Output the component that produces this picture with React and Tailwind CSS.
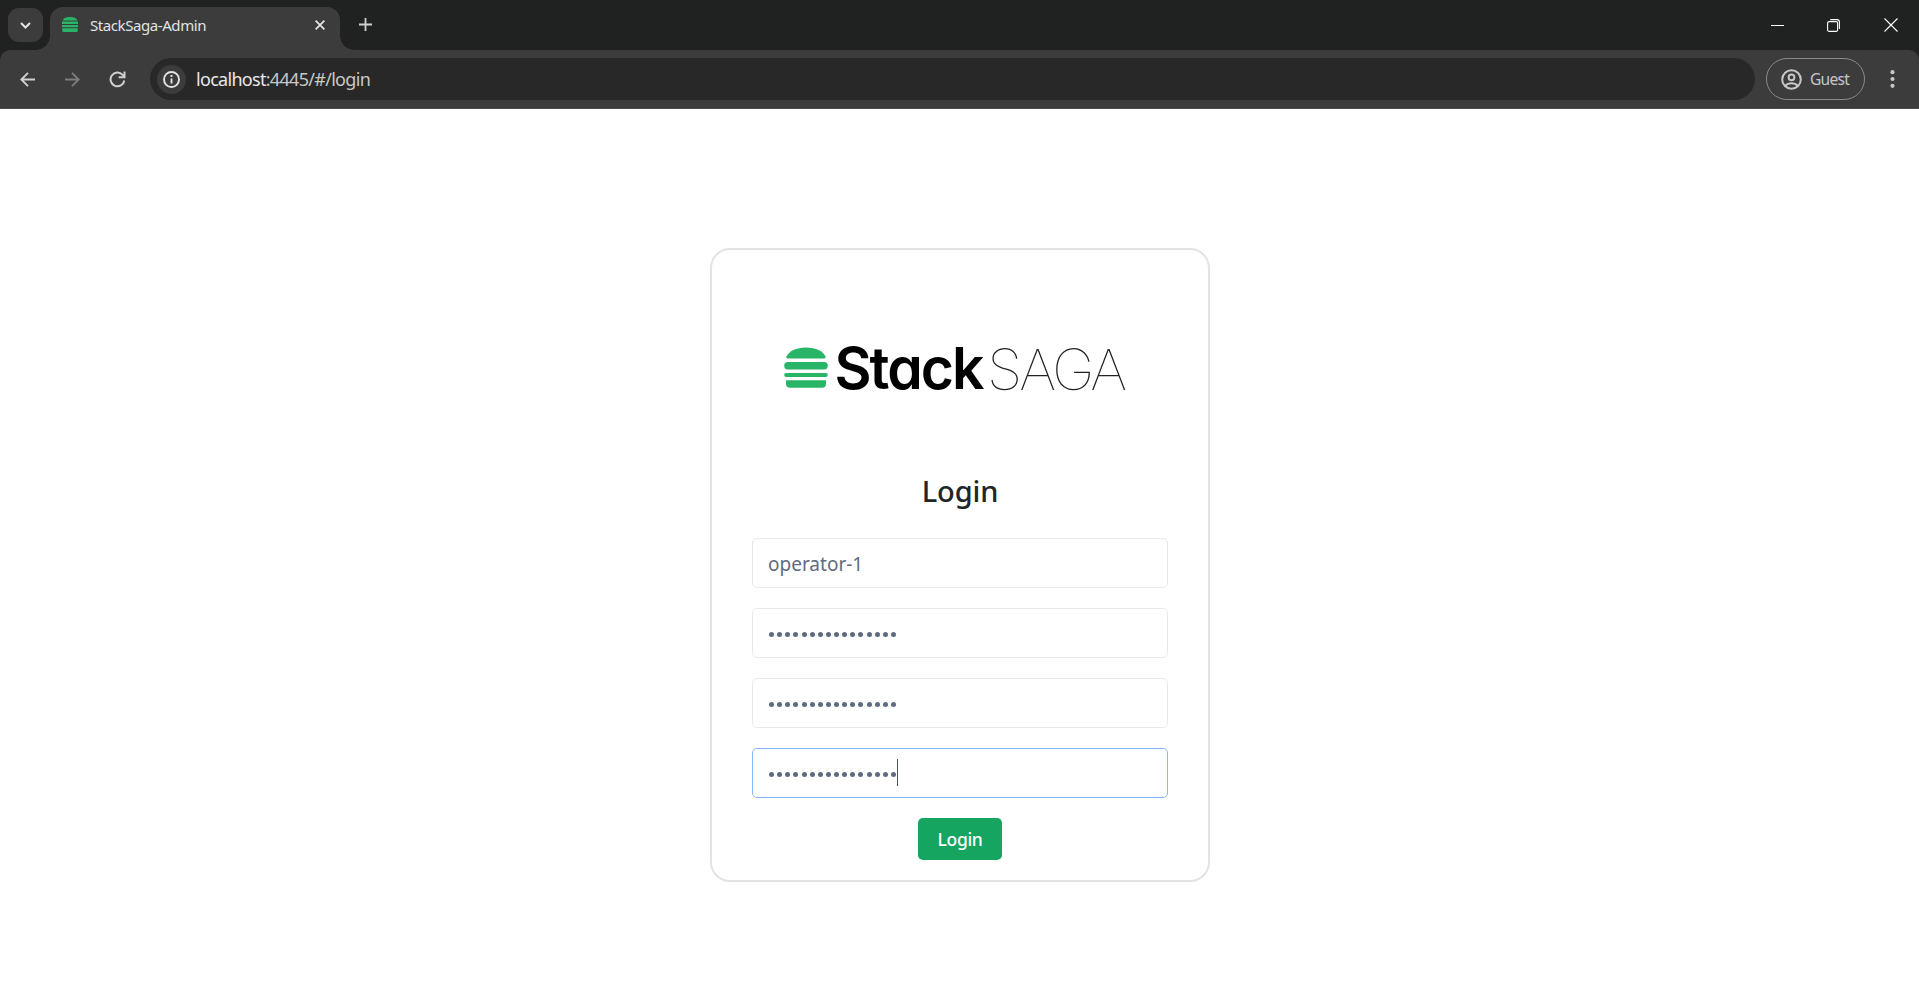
import React from "react";

function Burger({ className }) {
  return (
    <svg className={className} viewBox="0 0 44 41" preserveAspectRatio="none" fill="#28b568">
      <path d="M2.3 9.8C5 4 12 .5 22 .5S39 4 41.700 9.800q.4 1.700-1.700 1.700H4Q1.900 11.500 2.300 9.800Z" />
      <rect x="0.200" y="15" width="43.600" height="7.500" rx="3.700" />
      <rect x="0.200" y="26" width="43.600" height="4" rx="2" />
      <path d="M2 33.300h40v3.500q0 4-4 4H6q-4 0-4-4Z" />
    </svg>
  );
}

function TabIcon() {
  return (
    <svg className="h-[15px] w-4" viewBox="0 0 16 15" fill="#28b568">
      <path d="M.5 3.400Q2 0 8 0t7.500 3.400Z" />
      <path d="M0 4.500h16v2.500H0ZM0 8h16v2.200H0ZM.3 11.300h15.400V14q0 1-1 1H1.300q-1 0-1-1Z" />
    </svg>
  );
}

function TabStrip() {
  return (
    <div className="flex h-[50px] items-start bg-[#202221] pl-2 text-[#e3e3e3]">
      <div className="mt-2 flex h-[34px] w-[35px] items-center justify-center rounded-[11px] bg-[#3c3c3c]">
        <svg className="h-[7px] w-[11px]" viewBox="0 0 11 7" fill="none" stroke="currentColor" strokeWidth="2">
          <path d="M1 1l4.500 4.500L10 1" />
        </svg>
      </div>
      <div className="relative ml-[7px] mt-[7px] flex h-[43px] w-[290px] items-center rounded-t-[13px] bg-[#3c3c3c] pb-[8px] pl-3 pr-[15px]">
        <span className="absolute -left-3.5 bottom-0 size-3.5 bg-[radial-gradient(circle_at_0_0,transparent_13.500px,#3c3c3c_14px)]" />
        <span className="absolute -right-3.5 bottom-0 size-3.5 bg-[radial-gradient(circle_at_100%_0,transparent_13.500px,#3c3c3c_14px)]" />
        <TabIcon />
        <span className="ml-3 mt-px flex-1 whitespace-nowrap text-[15px] leading-5 tracking-[-0.420px]">StackSaga-Admin</span>
        <svg className="mt-px size-[10px]" viewBox="0 0 10 10" stroke="currentColor" strokeWidth="1.800">
          <path d="M.6.6l8.800 8.800M9.400.6L.6 9.400" />
        </svg>
      </div>
      <svg className="ml-[19px] mt-[18px] size-[13px]" viewBox="0 0 13 13" stroke="#cfcfcf" strokeWidth="1.800">
        <path d="M0 6.500h13M6.500 0v13" />
      </svg>
      <div className="ml-auto mr-[21px] mt-[18px] flex items-center gap-[43px]">
        <svg className="size-[13px]" viewBox="0 0 13 13" stroke="#fff">
          <path d="M0 6.500h13" />
        </svg>
        <svg className="size-[13px]" viewBox="0 0 13 13" fill="none" stroke="#fff" strokeWidth="1.100">
          <path d="M3.200.6h6.700q2.500 0 2.500 2.500v7" />
          <rect x="0.600" y="2.600" width="10" height="9.800" rx="1.500" />
        </svg>
        <svg className="ml-px size-[14px]" viewBox="0 0 14 14" stroke="#fff" strokeWidth="1.100">
          <path d="M.5.5l13 13M13.500.5l-13 13" />
        </svg>
      </div>
    </div>
  );
}

function Toolbar() {
  return (
    <div className="bg-[#202221]">
      <div className="flex h-[59px] items-center rounded-t-[10px] border-b border-[#484848] bg-[#3c3c3c] pl-5 pr-6">
        <svg className="size-[15px]" viewBox="0 0 15 15" fill="none" stroke="#d0d0d0" strokeWidth="1.900">
          <path d="M15 7.500H1.500M8 .8L1.300 7.500 8 14.200" />
        </svg>
        <svg className="ml-[30px] size-[15px]" viewBox="0 0 15 15" fill="none" stroke="#7c7c7c" strokeWidth="1.900">
          <path d="M0 7.500h13.500M7 .8l6.700 6.700L7 14.200" />
        </svg>
        <svg className="ml-[29px] size-[17px]" viewBox="0 0 17 17" fill="none" stroke="#d0d0d0" strokeWidth="2">
          <path d="M15.300 9.500A6.900 6.900 0 1 1 13.600 3.800L15.300 5.500" />
          <path d="M15.500.4v5.800H9.700" />
        </svg>
        <div className="ml-6 flex h-[42px] w-[1605px] items-center rounded-full bg-[#282828] pl-[7px]">
          <div className="flex size-[29px] items-center justify-center rounded-full bg-[#3c3c3c]">
            <svg className="size-[17px]" viewBox="0 0 17 17" fill="none" stroke="#e3e3e3">
              <circle cx="8.500" cy="8.500" r="7.500" strokeWidth="1.900" />
              <path d="M8.500 7.500v5M8.500 4v2" strokeWidth="1.900" />
            </svg>
          </div>
          <span className="ml-[10px] whitespace-nowrap text-[18px] leading-6 tracking-[-0.700px] text-[#c7c7c7]">
            <span className="text-[#e8e8e8]">localhost</span>:4445/#/login
          </span>
        </div>
        <div className="ml-[11px] flex h-[42px] w-[99px] items-center rounded-full border border-[#8a8a8a] pl-3.5">
          <svg className="size-[21px]" viewBox="0 0 21 21" fill="none" stroke="#c7c7c7" strokeWidth="2">
            <circle cx="10.500" cy="10.500" r="9.300" />
            <circle cx="10.500" cy="8.300" r="2.900" />
            <path d="M4 17q2.500-2.700 6.500-2.700T17 17" />
          </svg>
          <span className="ml-2 text-[15.500px] leading-5 tracking-[-0.700px] text-[#c7c7c7]">Guest</span>
        </div>
        <svg className="ml-auto h-[18px] w-[5px]" viewBox="0 0 5 18" fill="#c7c7c7">
          <circle cx="2.500" cy="2.200" r="2.100" />
          <circle cx="2.500" cy="9" r="2.100" />
          <circle cx="2.500" cy="15.800" r="2.100" />
        </svg>
      </div>
    </div>
  );
}

function Logo() {
  return (
    <div className="flex h-[60px] items-start pl-[32px]">
      <Burger className="mt-[8px] h-[41px] w-[44px]" />
      <svg className="ml-[4px] h-[60px] w-[310px] overflow-visible" viewBox="-4 0 310 60">
        <text x="-1.500" y="50.300" textLength="148" lengthAdjust="spacingAndGlyphs" className="fill-black font-['Inter',sans-serif] text-[58px] font-semibold tracking-[-2px] [font-feature-settings:'cv11']">
          Stack
        </text>
        <text x="151" y="50.500" textLength="137" lengthAdjust="spacingAndGlyphs" className="fill-[#222] font-['Inter',sans-serif] text-[56.500px] font-thin tracking-[-3px]">
          SAGA
        </text>
      </svg>
    </div>
  );
}

function Field({ children, focused = false }) {
  return (
    <div className={"flex h-[50px] items-center rounded-[5px] border px-[15px] text-[#5f6b80] " + (focused ? "border-[#84b5fa]" : "border-[#e8e8e8]")}>
      {children}
    </div>
  );
}

function Dots() {
  return (
    <span className="flex gap-[3.130px] pl-px pt-0.5">
      {Array.from({ length: 16 }, (_, i) => (
        <span key={i} className="size-[5px] rounded-full bg-[#5f6b80]" />
      ))}
    </span>
  );
}

export default function App() {
  return (
    <div className="h-[1006px] w-[1919px] overflow-hidden bg-white font-['Noto_Sans','Open_Sans',sans-serif]">
      <TabStrip />
      <Toolbar />
      <main className="flex justify-center pl-px pt-[139px]">
        <div className="flex h-[634px] w-[500px] flex-col rounded-[20px] border-2 border-[#e3e3e3] px-10 pt-[89px]">
          <Logo />
          <h1 className="mt-[70px] h-11 text-center text-[29px] font-medium leading-[44px] tracking-[-0.100px] text-[#212529]">Login</h1>
          <div className="mt-[25px] flex flex-col gap-5">
            <Field><span className="pt-0.5 text-[19px] leading-6">operator-1</span></Field>
            <Field><Dots /></Field>
            <Field><Dots /></Field>
            <Field focused>
              <Dots />
              <span className="ml-[1.500px] h-[27px] w-px -translate-y-px bg-[#4b5565]" />
            </Field>
          </div>
          <button className="mt-5 h-[42px] w-[84px] self-center rounded-[5px] bg-[#16a461] text-[17.500px] font-medium tracking-[-0.300px] text-white">Login</button>
        </div>
      </main>
    </div>
  );
}
